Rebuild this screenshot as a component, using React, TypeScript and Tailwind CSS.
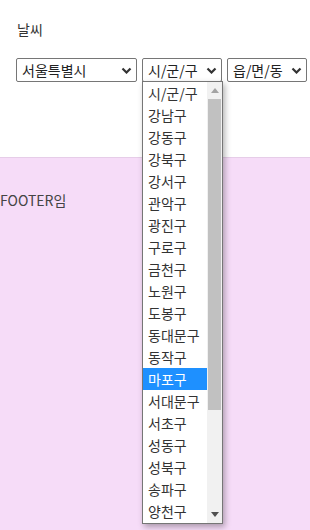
const guList = [
  '시/군/구',
  '강남구',
  '강동구',
  '강북구',
  '강서구',
  '관악구',
  '광진구',
  '구로구',
  '금천구',
  '노원구',
  '도봉구',
  '동대문구',
  '동작구',
  '마포구',
  '서대문구',
  '서초구',
  '성동구',
  '성북구',
  '송파구',
  '양천구',
];

function Chevron() {
  return (
    <svg width="11" height="7" viewBox="0 0 11 7" className="shrink-0">
      <path d="M1.5 1.5 L5.5 5.5 L9.5 1.5" fill="none" stroke="#333" strokeWidth="2.2" />
    </svg>
  );
}

function FakeSelect({ label, width }: { label: string; width: string }) {
  return (
    <div
      className={`${width} shrink-0 h-[24px] flex items-center justify-between pl-[5px] pr-[4px] border border-[#767676] rounded-[2px] bg-white text-[14px] text-[#222] whitespace-nowrap`}
    >
      <span className="leading-none">{label}</span>
      <Chevron />
    </div>
  );
}

export default function App() {
  const font = { fontFamily: '"Noto Sans CJK KR", "Noto Sans", sans-serif' };
  return (
    <div className="w-[310px] h-[530px] flex flex-col bg-white overflow-hidden" style={font}>
      <header className="h-[157px] shrink-0 pl-[16px] pt-[19px]">
        <h2 className="text-[14px] text-[#333] leading-[20px] pl-[1px]">날씨</h2>
        <div className="mt-[19px] flex gap-[5px]">
          <FakeSelect label="서울특별시" width="w-[121px]" />
          <div className="relative shrink-0">
            <FakeSelect label="시/군/구" width="w-[80px]" />
            <div className="absolute left-0 top-[23px] w-[81px] h-[443px] z-10 bg-white border border-[#767676] shadow-[2px_3px_6px_rgba(0,0,0,0.3)] flex">
              <ul className="flex-1 flex flex-col">
                {guList.map((g) => (
                  <li
                    key={g}
                    className={`h-[22px] shrink-0 flex items-center pl-[5px] text-[14px] leading-none whitespace-nowrap ${
                      g === '마포구' ? 'bg-[#1e90ff] text-white' : 'text-[#333]'
                    }`}
                  >
                    {g}
                  </li>
                ))}
              </ul>
              <div className="w-[15px] bg-[#f1f1f1] flex flex-col items-center">
                <div className="h-[17px] flex items-center justify-center">
                  <svg width="8" height="5" viewBox="0 0 8 5">
                    <path d="M0 5 L4 0 L8 5 Z" fill="#a3a3a3" />
                  </svg>
                </div>
                <div className="w-[13px] h-[311px] bg-[#c1c1c1]" />
                <div className="flex-1" />
                <div className="h-[17px] flex items-center justify-center">
                  <svg width="8" height="5" viewBox="0 0 8 5">
                    <path d="M0 0 L8 0 L4 5 Z" fill="#505050" />
                  </svg>
                </div>
              </div>
            </div>
          </div>
          <FakeSelect label="읍/면/동" width="w-[80px]" />
        </div>
      </header>
      <footer className="flex-1 bg-[#f6dcf8] border-t border-[#e6cde8] pt-[32px]">
        <p className="text-[14px] text-[#444] leading-[20px]">FOOTER임</p>
      </footer>
    </div>
  );
}
